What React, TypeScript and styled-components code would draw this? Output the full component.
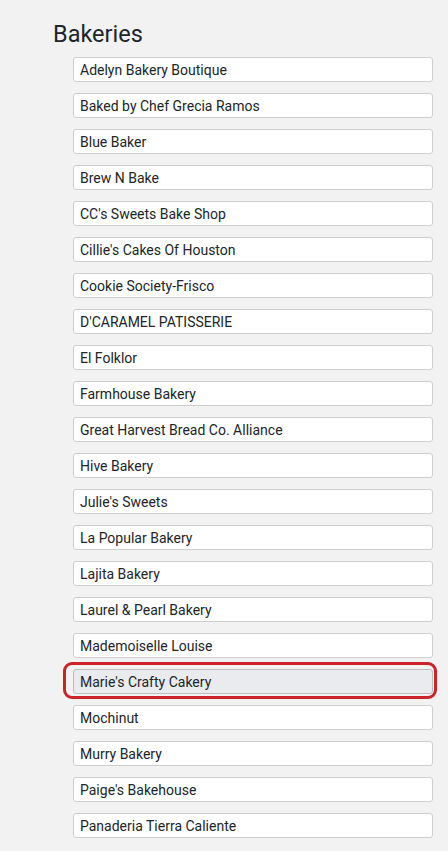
import styled, { createGlobalStyle } from 'styled-components';

const bakeries = [
  'Adelyn Bakery Boutique',
  'Baked by Chef Grecia Ramos',
  'Blue Baker',
  'Brew N Bake',
  "CC's Sweets Bake Shop",
  "Cillie's Cakes Of Houston",
  'Cookie Society-Frisco',
  "D'CARAMEL PATISSERIE",
  'El Folklor',
  'Farmhouse Bakery',
  'Great Harvest Bread Co. Alliance',
  'Hive Bakery',
  "Julie's Sweets",
  'La Popular Bakery',
  'Lajita Bakery',
  'Laurel & Pearl Bakery',
  'Mademoiselle Louise',
  "Marie's Crafty Cakery",
  'Mochinut',
  'Murry Bakery',
  "Paige's Bakehouse",
  'Panaderia Tierra Caliente',
];

const selected = "Marie's Crafty Cakery";

const GlobalStyle = createGlobalStyle`
  html, body {
    margin: 0;
    background: #f2f2f2;
  }
  body {
    font-family: Roboto, "Liberation Sans", Arial, sans-serif;
    color: #212529;
  }
`;

const Page = styled.div`
  padding: 20px 15px 20px 53px;
`;

const Title = styled.h2`
  margin: 0 0 9px;
  font-size: 23.5px;
  font-weight: 400;
  line-height: 28px;
`;

const List = styled.ul`
  list-style: none;
  margin: 0;
  padding: 0 0 0 20px;
  display: flex;
  flex-direction: column;
  gap: 11px;
`;

const Item = styled.li<{ $active?: boolean }>`
  position: relative;
  height: 25px;
  box-sizing: border-box;
  display: flex;
  align-items: center;
  padding: 0 6px;
  font-size: 14px;
  background: ${p => (p.$active ? '#e9ebef' : '#fff')};
  border: 1px solid ${p => (p.$active ? '#bdbdbd' : '#cfcfcf')};
  border-radius: 3px;

  ${p => p.$active && `
    &::after {
      content: '';
      position: absolute;
      top: -8px;
      left: -11px;
      right: -5px;
      bottom: -6px;
      border: 3px solid #cc2229;
      border-radius: 9px;
      pointer-events: none;
    }
  `}
`;

const App = () => (
  <>
    <GlobalStyle />
    <Page>
      <Title>Bakeries</Title>
      <List>
        {bakeries.map(name => (
          <Item key={name} $active={name === selected}>{name}</Item>
        ))}
      </List>
    </Page>
  </>
);

export default App;
